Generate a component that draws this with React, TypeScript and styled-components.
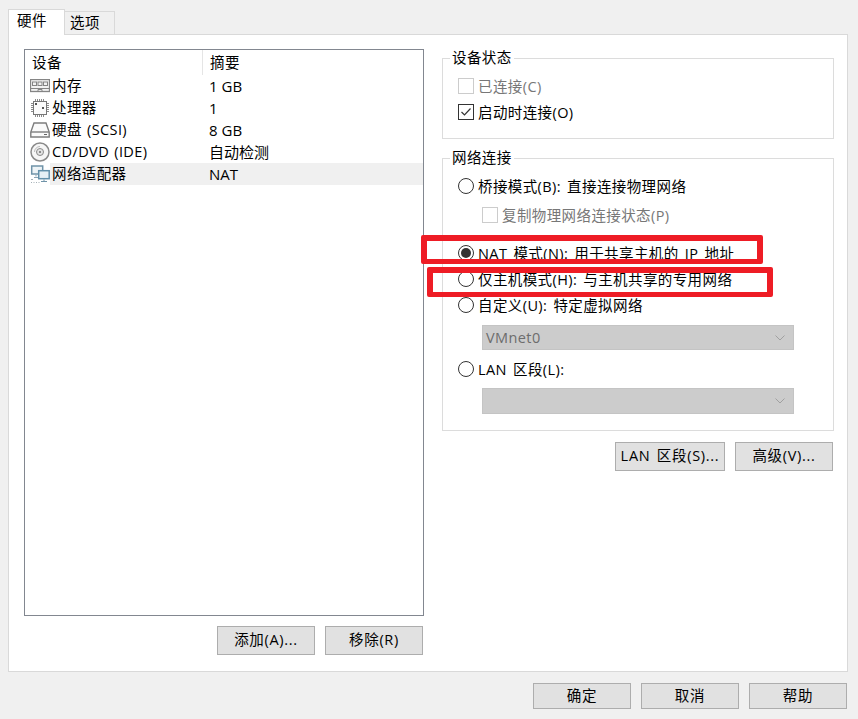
import React from "react";
import styled, { createGlobalStyle } from "styled-components";

const Global = createGlobalStyle`
  html, body { margin: 0; padding: 0; background: #f0f0f0; }
  body { font-family: "Open Sans", "Noto Sans CJK SC", sans-serif; font-size: 14.5px; color: #000; letter-spacing: 0.4px; }
  * { box-sizing: border-box; }
`;

const Page = styled.div`
  position: relative;
  width: 858px;
  height: 719px;
  overflow: hidden;
  background: #f0f0f0;
  padding: 9px 10px 0 8px;
`;
const TabBar = styled.div`
  display: flex;
  align-items: flex-end;
  height: 26px;
  position: relative;
  z-index: 1;
  margin-bottom: -1px;
`;
const Tab = styled.div<{ $active?: boolean }>`
  height: ${p => (p.$active ? 26 : 24)}px;
  width: ${p => (p.$active ? 57 : 51)}px;
  margin-left: ${p => (p.$active ? 0 : -1)}px;
  background: ${p => (p.$active ? "#fff" : "#f0f0f0")};
  border: 1px solid #d9d9d9;
  border-bottom: ${p => (p.$active ? "none" : "1px solid #d9d9d9")};
  padding: ${p => (p.$active ? "1px 0 0 8px" : "1px 0 0 5px")};
  line-height: 20px;
`;
const Pane = styled.div`
  height: 638px;
  background: #fff;
  border: 1px solid #d9d9d9;
  display: flex;
  gap: 18px;
  padding: 0 13px 0 15px;
`;
const LeftCol = styled.div`
  width: 400px;
  padding-top: 14px;
`;
const RightCol = styled.div`
  width: 392px;
  padding-top: 13px;
`;
const ListBox = styled.div`
  height: 567px;
  border: 1px solid #828790;
  background: #fff;
`;
const ListHead = styled.div`
  display: grid;
  grid-template-columns: 177px 1fr;
  height: 25px;
  line-height: 25px;
`;
const HeadCell = styled.div<{ $divider?: boolean }>`
  padding-left: 7px;
  border-left: ${p => (p.$divider ? "1px solid #e5e5e5" : "none")};
`;
const ListRow = styled.div`
  display: grid;
  grid-template-columns: 177px 1fr;
  height: 22px;
  line-height: 22px;
`;
const NameCell = styled.div`
  display: flex;
  align-items: center;
  padding-left: 5px;
  white-space: nowrap;
  word-spacing: 1px;
`;
const IconBox = styled.span`
  display: inline-flex;
  width: 20px;
  height: 22px;
  align-items: center;
  justify-content: center;
  flex: none;
`;
const NameText = styled.span<{ $selected?: boolean }>`
  flex: 1;
  height: 22px;
  padding-left: 2px;
  background: ${p => (p.$selected ? "#f0f0f0" : "transparent")};
`;
const ValueCell = styled.div<{ $selected?: boolean }>`
  padding-left: 7px;
  font-size: 15px;
  letter-spacing: 0;
  background: ${p => (p.$selected ? "#f0f0f0" : "transparent")};
`;
const ButtonRow = styled.div<{ $top: number }>`
  display: flex;
  justify-content: flex-end;
  gap: 10px;
  margin-top: ${p => p.$top}px;
  padding-right: 1px;
`;
const Button = styled.button<{ $w?: number; $h?: number }>`
  width: ${p => p.$w ?? 98}px;
  height: ${p => p.$h ?? 29}px;
  background: #e1e1e1;
  border: 1px solid #adadad;
  border-radius: 0;
  padding: 0;
  font: inherit;
  letter-spacing: 0.7px;
  word-spacing: 2px;
  color: #000;
  line-height: 1;
`;
const Group = styled.fieldset<{ $bottom: number; $top?: number }>`
  margin: ${p => p.$top ?? 0}px 0 0 0;
  padding: 5px 14px ${p => p.$bottom}px 15px;
  border: 1px solid #dcdcdc;
  min-width: 0;
`;
const GroupTitle = styled.legend`
  margin-left: -8px;
  padding: 0 2px;
  line-height: 20px;
  height: 20px;
`;
const Option = styled.div<{ $indent?: boolean; $top?: number; $disabled?: boolean }>`
  display: flex;
  align-items: center;
  gap: 4px;
  height: 26px;
  margin-top: ${p => p.$top ?? 0}px;
  margin-left: ${p => (p.$indent ? 24 : 0)}px;
  color: ${p => (p.$disabled ? "#777" : "#000")};
  white-space: nowrap;
  word-spacing: 2px;
`;
const OptionText = styled.span`
  margin-top: -2px;
`;
const Check = styled.span<{ $disabled?: boolean }>`
  width: 16px;
  height: 16px;
  flex: none;
  display: inline-flex;
  border: 1px solid ${p => (p.$disabled ? "#ccc" : "#333")};
  background: #fff;
`;
const Radio = styled.span<{ $on?: boolean }>`
  width: 16px;
  height: 16px;
  flex: none;
  border-radius: 50%;
  border: 1px solid #333;
  background: #fff;
  display: inline-flex;
  align-items: center;
  justify-content: center;
  &::after {
    content: "";
    display: ${p => (p.$on ? "block" : "none")};
    width: 10px;
    height: 10px;
    border-radius: 50%;
    background: #333;
  }
`;
const Select = styled.div<{ $top: number; $h: number }>`
  display: flex;
  align-items: center;
  justify-content: space-between;
  width: 312px;
  height: ${p => p.$h}px;
  margin: ${p => p.$top}px 0 0 24px;
  padding: 0 8px 0 3px;
  background: #ccc;
  border: 1px solid #c4c4c4;
  color: #6d6d6d;
`;
const Footer = styled.div`
  display: flex;
  justify-content: flex-end;
  gap: 10px;
  margin-top: 11px;
  margin-right: 1px;
`;
const Mark = styled.div<{ $x: number; $y: number; $w: number; $h: number }>`
  position: absolute;
  left: ${p => p.$x}px;
  top: ${p => p.$y}px;
  width: ${p => p.$w}px;
  height: ${p => p.$h}px;
  border: 6px solid #ee1c25;
  border-bottom-width: 5px;
  border-radius: 2px;
`;

const RamIcon = () => (
  <svg width="20" height="14" viewBox="0 0 20 14" fill="none" stroke="#858585">
    <rect x="0.5" y="0.5" width="19" height="12" fill="#f2f2f2" strokeWidth="1.3" />
    <rect x="2.5" y="3" width="4" height="3.500" />
    <rect x="8" y="3" width="4" height="3.500" />
    <rect x="13.5" y="3" width="4" height="3.500" />
    <path d="M1 9.500h18M8 12.500v-2h4v2" />
  </svg>
);
const CpuIcon = () => (
  <svg width="20" height="20" viewBox="0 0 20 20" fill="none" stroke="#8a8a8a">
    <rect x="3.5" y="3.5" width="13" height="13" fill="#fbfbfb" stroke="#777" />
    <path d="M5.500 1v2M7.500 1v2M9.500 1v2M11.500 1v2M13.500 1v2M5.500 17v2M7.500 17v2M9.500 17v2M11.500 17v2M13.500 17v2M1 5.500h2M1 7.500h2M1 9.500h2M1 11.500h2M1 13.500h2M17 5.500h2M17 7.500h2M17 9.500h2M17 11.500h2M17 13.500h2" />
    <rect x="5" y="5" width="2" height="2" fill="#555" stroke="none" />
    <rect x="12" y="9" width="2" height="2" fill="#555" stroke="none" />
  </svg>
);
const DiskIcon = () => (
  <svg width="20" height="16" viewBox="0 0 20 16" fill="none" stroke="#7d7d7d" strokeWidth="1.4">
    <path d="M4 1h12l3.200 9v5H.8v-5z" fill="#fafafa" />
    <path d="M1 10h18" />
    <path d="M14 12.500h3" stroke="#666" strokeWidth="1" />
  </svg>
);
const DiscIcon = () => (
  <svg width="20" height="20" viewBox="0 0 20 20" fill="none" stroke="#8a8a8a">
    <circle cx="10" cy="10" r="9" fill="#f6f6f6" strokeWidth="1.500" />
    <circle cx="10" cy="10" r="3.500" fill="#e4e4e4" />
    <circle cx="10" cy="10" r="1.100" fill="#777" stroke="none" />
    <path d="M4.500 10a5.500 5.500 0 0 1 5.500-5.500" stroke="#bbb" />
  </svg>
);
const NetIcon = () => (
  <svg width="20" height="19" viewBox="0 0 20 19" fill="none">
    <rect x="1.700" y="1" width="11" height="8" fill="#eef4f7" stroke="#6f93a8" strokeWidth="1.500" />
    <path d="M6 10v1.500M4 12.500h5" stroke="#8ba5b5" />
    <rect x="8.700" y="5.700" width="10.500" height="8" fill="#e6f0f5" stroke="#6390aa" strokeWidth="1.500" />
    <path d="M14 14.500v1.500M11 16.500h6" stroke="#6f93a8" />
    <path d="M1 14.500h2M1 17.500h1M3.500 17.500h1M6 17.500h1M8.500 17.500h1" stroke="#a5b0b7" />
  </svg>
);
const Tick = () => (
  <svg width="14" height="14" viewBox="0 0 14 14" fill="none" stroke="#333" strokeWidth="1.2">
    <path d="M2.500 7l3 3 6-6.500" />
  </svg>
);
const Chevron = () => (
  <svg width="10" height="6" viewBox="0 0 10 6" fill="none" stroke="#a0a0a0">
    <path d="M.5.500 5 5 9.500.500" />
  </svg>
);

const devices = [
  { icon: <RamIcon />, name: "内存", value: "1 GB" },
  { icon: <CpuIcon />, name: "处理器", value: "1" },
  { icon: <DiskIcon />, name: "硬盘 (SCSI)", value: "8 GB" },
  { icon: <DiscIcon />, name: "CD/DVD (IDE)", value: "自动检测" },
  { icon: <NetIcon />, name: "网络适配器", value: "NAT", selected: true },
];

export default function App() {
  return (
    <Page>
      <Global />
      <TabBar>
        <Tab $active>硬件</Tab>
        <Tab>选项</Tab>
      </TabBar>
      <Pane>
        <LeftCol>
          <ListBox>
            <ListHead>
              <HeadCell>设备</HeadCell>
              <HeadCell $divider>摘要</HeadCell>
            </ListHead>
            {devices.map(d => (
              <ListRow key={d.name}>
                <NameCell>
                  <IconBox>{d.icon}</IconBox>
                  <NameText $selected={d.selected}>{d.name}</NameText>
                </NameCell>
                <ValueCell $selected={d.selected}>{d.value}</ValueCell>
              </ListRow>
            ))}
          </ListBox>
          <ButtonRow $top={10}>
            <Button>添加(A)...</Button>
            <Button>移除(R)</Button>
          </ButtonRow>
        </LeftCol>
        <RightCol>
          <Group $bottom={13}>
            <GroupTitle>设备状态</GroupTitle>
            <Option $disabled>
              <Check $disabled />
              <OptionText>已连接(C)</OptionText>
            </Option>
            <Option>
              <Check>
                <Tick />
              </Check>
              <OptionText>启动时连接(O)</OptionText>
            </Option>
          </Group>
          <Group $bottom={16} $top={9}>
            <GroupTitle>网络连接</GroupTitle>
            <Option>
              <Radio />
              <OptionText>桥接模式(B): 直接连接物理网络</OptionText>
            </Option>
            <Option $indent $disabled $top={3}>
              <Check $disabled />
              <OptionText>复制物理网络连接状态(P)</OptionText>
            </Option>
            <Option $top={12}>
              <Radio $on />
              <OptionText>NAT 模式(N): 用于共享主机的 IP 地址</OptionText>
            </Option>
            <Option>
              <Radio />
              <OptionText>仅主机模式(H): 与主机共享的专用网络</OptionText>
            </Option>
            <Option>
              <Radio />
              <OptionText>自定义(U): 特定虚拟网络</OptionText>
            </Option>
            <Select $top={7} $h={25}>
              VMnet0
              <Chevron />
            </Select>
            <Option $top={6}>
              <Radio />
              <OptionText>LAN 区段(L):</OptionText>
            </Option>
            <Select $top={6} $h={26}>
              <span />
              <Chevron />
            </Select>
          </Group>
          <ButtonRow $top={11}>
            <Button $w={110}>LAN 区段(S)...</Button>
            <Button>高级(V)...</Button>
          </ButtonRow>
        </RightCol>
      </Pane>
      <Footer>
        <Button $h={26}>确定</Button>
        <Button $h={26}>取消</Button>
        <Button $h={26}>帮助</Button>
      </Footer>
      <Mark $x={421} $y={235} $w={342} $h={29} />
      <Mark $x={427} $y={267} $w={346} $h={30} />
    </Page>
  );
}
